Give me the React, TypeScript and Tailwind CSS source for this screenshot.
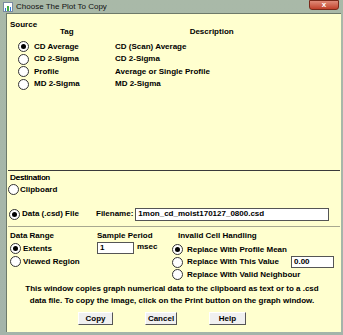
import React from 'react';

function Radio({ checked }: { checked?: boolean }) {
  return (
    <span className="inline-flex w-[11px] h-[11px] rounded-full border border-[#333] bg-white items-center justify-center shrink-0">
      {checked && <span className="w-[5px] h-[5px] rounded-full bg-black" />}
    </span>
  );
}

function Btn({ label, w }: { label: string; w: string }) {
  return (
    <div
      className={`h-[13px] ${w} flex items-center justify-center bg-[#f0f0f0] border border-t-white border-l-white border-r-[#555] border-b-[#555] text-black`}
    >
      {label}
    </div>
  );
}

const sources = [
  { tag: 'CD Average', desc: 'CD (Scan) Average', on: true },
  { tag: 'CD 2-Sigma', desc: 'CD 2-Sigma' },
  { tag: 'Profile', desc: 'Average or Single Profile' },
  { tag: 'MD 2-Sigma', desc: 'MD 2-Sigma' },
];

export default function App() {
  return (
    <div
      className="w-[343px] h-[335px] bg-gradient-to-b from-[#a9b9a8] to-[#a4b4aa] flex flex-col overflow-hidden"
      style={{ fontFamily: '"Liberation Sans", Arial, sans-serif' }}
    >
      {/* Title bar */}
      <div className="h-[13px] flex items-center relative">
        <div className="ml-[3px] w-[10px] h-[10px] bg-white border border-[#7a8aa0] flex items-end gap-[1px] px-[1px]">
          <span className="w-[2px] h-[3px] bg-[#2a7de1]" />
          <span className="w-[2px] h-[5px] bg-[#44aa44]" />
          <span className="w-[2px] h-[4px] bg-[#2a7de1]" />
        </div>
        <span className="ml-[3px] text-[8px] text-[#111] leading-none">Choose The Plot To Copy</span>
        <div className="absolute right-[4px] top-0 w-[30px] h-[10px] rounded-b-[3px] bg-gradient-to-b from-[#e08a78] to-[#c0402a] border border-[#7a2a1a] flex items-center justify-center">
          <span className="text-white text-[8px] font-bold leading-none">x</span>
        </div>
      </div>

      {/* Content */}
      <div className="ml-[6px] mr-[2px] h-[319px] bg-[#ffffcf] border-l border-t border-[#6d7a6a] text-[8px] font-bold text-black leading-none flex flex-col">
        {/* Source */}
        <div className="pl-[3px] pt-[7px]">Source</div>
        <div className="flex mt-[-1px]">
          <span className="ml-[53px]">Tag</span>
          <span className="ml-[116px]">Description</span>
        </div>
        <div className="flex flex-col gap-[1.5px] mt-[5px] pl-[11px]">
          {sources.map((s) => (
            <div key={s.tag} className="flex items-center h-[11px]">
              <Radio checked={s.on} />
              <span className="ml-[5px] w-[81px]">{s.tag}</span>
              <span>{s.desc}</span>
            </div>
          ))}
        </div>

        <div className="flex-1" />

        {/* Destination */}
        <div className="mx-[1px] h-px bg-[#3a3a3a]" />
        <div className="pl-[3px] pt-[3px] font-normal [text-shadow:0_0_0.3px_#000]">Destination</div>
        <div className="flex items-center mt-[2px] pl-[1px]">
          <Radio />
          <span className="ml-px">Clipboard</span>
        </div>
        <div className="flex items-center mt-[12px] pl-[2px] h-[14px]">
          <Radio checked />
          <span className="ml-[2px] w-[74px]">Data (.csd) File</span>
          <span>Filename:</span>
          <div className="ml-[2px] w-[194px] h-[13px] bg-white border border-[#555] flex items-center pl-[2px]">
            1mon_cd_moist170127_0800.csd
          </div>
        </div>
        <div className="mx-[1px] mt-[5px] h-px bg-[#a8a890]" />

        {/* Options */}
        <div className="flex pt-[5px] pl-[3px]">
          <div className="w-[87px] flex flex-col">
            <span>Data Range</span>
            <div className="flex items-center mt-[3px]">
              <Radio checked />
              <span className="ml-[2px]">Extents</span>
            </div>
            <div className="flex items-center mt-[2px]">
              <Radio />
              <span className="ml-[2px]">Viewed Region</span>
            </div>
          </div>
          <div className="w-[80px] flex flex-col">
            <span>Sample Period</span>
            <div className="flex items-start mt-[2px]">
              <div className="w-[37px] h-[12px] bg-white border border-[#555] flex items-center pl-[2px]">1</div>
              <span className="ml-[3px] mt-[1px]">msec</span>
            </div>
          </div>
          <div className="flex flex-col">
            <span className="ml-[1px]">Invalid Cell Handling</span>
            <div className="flex items-center mt-[4px] h-[11px] -ml-[5px]">
              <Radio checked />
              <span className="ml-[4px]">Replace With Profile Mean</span>
            </div>
            <div className="flex items-center mt-[1px] h-[12px] -ml-[5px]">
              <Radio />
              <span className="ml-[4px] w-[104px]">Replace With This Value</span>
              <div className="w-[43px] h-[12px] bg-white border border-[#555] flex items-center pl-[2px]">0.00</div>
            </div>
            <div className="flex items-center mt-[1px] h-[11px] -ml-[5px]">
              <Radio />
              <span className="ml-[4px]">Replace With Valid Neighbour</span>
            </div>
          </div>
        </div>

        {/* Help text */}
        <div className="mt-[3px] text-center leading-[12px] pr-[4px]">
          This window copies graph numerical data to the clipboard as text or to a .csd
          <br />
          data file. To copy the image, click on the Print button on the graph window.
        </div>

        {/* Buttons */}
        <div className="flex mt-[5px] mb-[7px] pl-[71px] gap-[32px]">
          <Btn label="Copy" w="w-[35px]" />
          <Btn label="Cancel" w="w-[32px]" />
          <Btn label="Help" w="w-[37px]" />
        </div>
      </div>
    </div>
  );
}
